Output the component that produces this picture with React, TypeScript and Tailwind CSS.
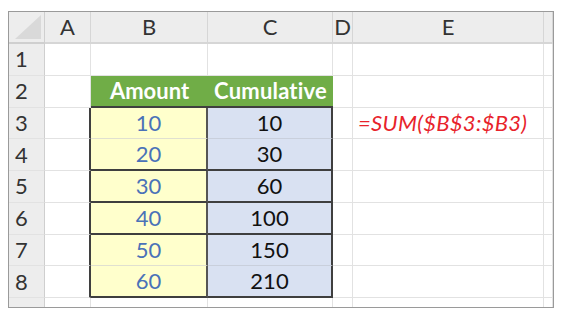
import React from "react";

const cols = ["A", "B", "C", "D", "E", ""];
const amounts = [10, 20, 30, 40, 50, 60];
const totals = [10, 30, 60, 100, 150, 210];
// dark rule under these data rows (3..8)
const darkBelow = [false, true, true, true, false, true];

const grid = "border-r border-b border-[#e2e2e2]";

export default function App() {
  return (
    <div className="bg-white w-[565px] h-[333px] pt-[11px] pl-[8px]" style={{ fontFamily: "Lato, 'Open Sans', sans-serif" }}>
      <div className="w-[546px] border border-[#9a9a9a] grid grid-cols-[36px_46px_117px_125px_20px_191px_9px] text-[22px] leading-none text-[#333]">
        {/* column header row */}
        <div className="h-[32px] bg-[#ededed] border-r border-b-2 border-[#cfcfcf] relative overflow-hidden">
          <svg className="absolute right-[3px] bottom-[3px]" width="26" height="24" viewBox="0 0 26 24">
            <polygon points="26,0 26,24 0,24" fill="#d9d9d9" />
          </svg>
        </div>
        {cols.map((c, i) => (
          <div key={i} className="h-[32px] bg-[#ededed] border-r border-b-2 border-[#d6d6d6] flex items-center justify-center">
            {c}
          </div>
        ))}

        {/* row 1 */}
        <RowHead n={1} />
        {cols.map((_, i) => (
          <div key={i} className={`h-[31.75px] ${grid}`} />
        ))}

        {/* row 2 */}
        <RowHead n={2} />
        <div className={`h-[31.75px] ${grid}`} />
        <div className="h-[31.75px] bg-[#70ad47] border-b-2 border-[#3f3f3f] flex items-center justify-center text-white font-bold">
          Amount
        </div>
        <div className="h-[31.75px] bg-[#70ad47] border-b-2 border-[#3f3f3f] flex items-center justify-center text-white font-bold tracking-[0.2px]">
          Cumulative
        </div>
        <div className={`h-[31.75px] ${grid}`} />
        <div className={`h-[31.75px] ${grid}`} />
        <div className={`h-[31.75px] ${grid}`} />

        {amounts.map((a, r) => (
          <React.Fragment key={r}>
            <RowHead n={r + 3} />
            <div className="h-[31.75px] border-b border-[#e2e2e2] border-r-2 border-r-[#3f3f3f]" />
            <div
              className={`h-[31.75px] bg-[#ffffcc] border-r-2 border-r-[#555] flex items-center justify-center text-[#4a72b8] ${
                darkBelow[r] ? "border-b-2 border-b-[#3f3f3f]" : "border-b border-b-[#e0e0d0]"
              }`}
            >
              {a}
            </div>
            <div
              className={`h-[31.75px] bg-[#d9e1f2] border-r-2 border-r-[#3f3f3f] flex items-center justify-center text-[#111] ${
                darkBelow[r] ? "border-b-2 border-b-[#3f3f3f]" : "border-b border-b-[#c9cfdc]"
              }`}
            >
              {totals[r]}
            </div>
            <div className={`h-[31.75px] ${grid}`} />
            <div className={`h-[31.75px] ${grid} flex items-center pl-[5px]`}>
              {r === 0 && <span className="italic text-[#e8232b] tracking-[0.3px]">=SUM($B$3:$B3)</span>}
            </div>
            <div className={`h-[31.75px] ${grid}`} />
          </React.Fragment>
        ))}

        {/* partial row 9 */}
        <div className="h-[9px] bg-[#ededed] border-r border-[#cfcfcf]" />
        {cols.map((_, i) => (
          <div key={i} className="h-[9px] border-r border-[#e2e2e2]" />
        ))}
      </div>
    </div>
  );
}

function RowHead({ n }: { n: number }) {
  return (
    <div className="h-[31.75px] bg-[#ededed] border-r border-b border-r-[#cfcfcf] border-b-[#e2e2e2] flex items-center pl-[6px]">
      {n}
    </div>
  );
}
